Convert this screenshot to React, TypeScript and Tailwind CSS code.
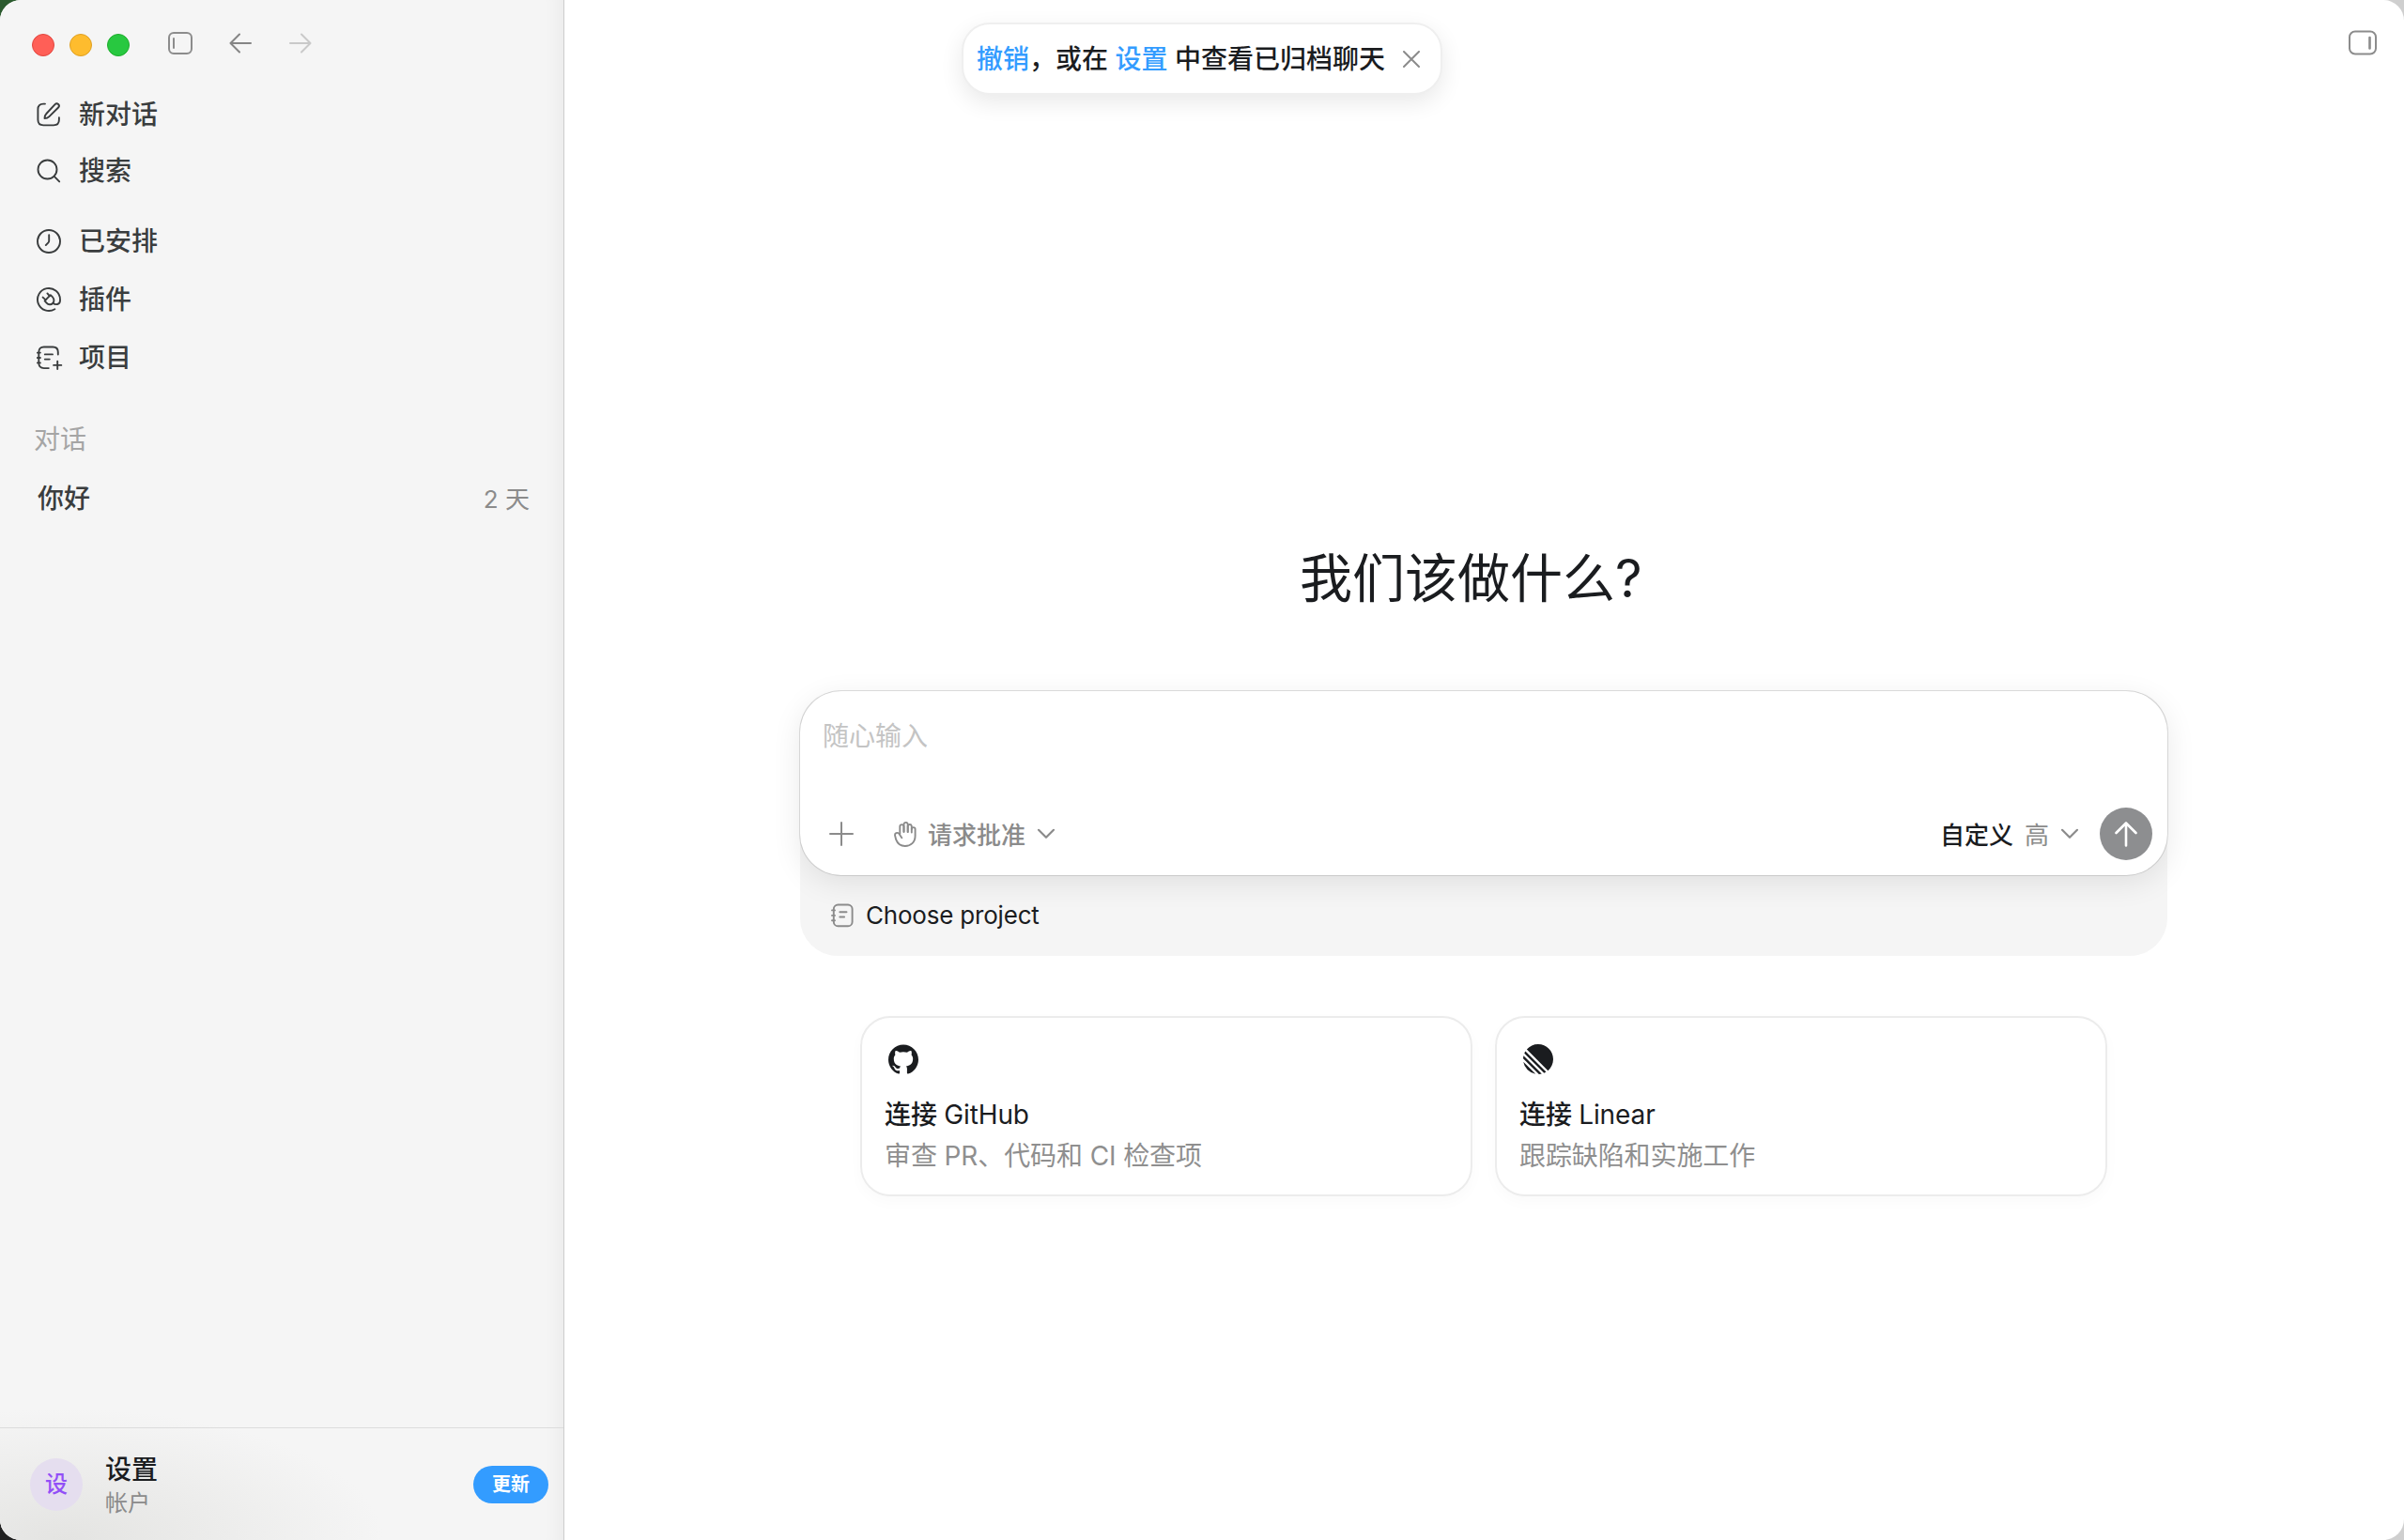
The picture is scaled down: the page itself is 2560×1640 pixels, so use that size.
import React from 'react'
import { SiGithub, SiLinear } from 'react-icons/si'

type IconProps = {
  className?: string
  width: number
  height: number
  stroke?: number
  children: React.ReactNode
}

const Icon: React.FC<IconProps> = ({ className = '', width, height, stroke = 2, children }) => (
  <svg
    width={width}
    height={height}
    viewBox={`0 0 ${width} ${height}`}
    fill="none"
    stroke="currentColor"
    strokeWidth={stroke}
    strokeLinecap="round"
    strokeLinejoin="round"
    className={`shrink-0 ${className}`}
  >
    {children}
  </svg>
)

const ComposeIcon = () => (
  <Icon width={26} height={26} stroke={1.9}>
    <path d="M9 1.6H7.2C3.4 1.6 1.4 3.6 1.4 7.4v11.2c0 3.8 2 5.8 5.8 5.8h10.9c3.8 0 5.8-2 5.8-5.8v-2.4" />
    <path d="M19.6 2.1c1-1 2.5-1 3.5-.1 1 1 1 2.5 0 3.5L13.4 15.2c-1.2 1.2-2.9 1.9-4.9 1.9.1-2 .7-3.9 1.9-5.1z" />
  </Icon>
)

const SearchIcon = () => (
  <Icon width={26} height={26} stroke={1.9}>
    <circle cx="11.5" cy="11.5" r="10" />
    <path d="M18.8 18.8L24.2 24.4" />
  </Icon>
)

const ClockIcon = () => (
  <Icon width={26} height={26} stroke={1.9}>
    <circle cx="13" cy="13" r="12" />
    <path d="M13.2 6.2v6.2c0 .8-.3 1.4-.8 2l-2.6 2.7" />
  </Icon>
)

const PluginIcon = () => (
  <Icon width={26} height={26} stroke={1.9}>
    <path d="M19.3 23.2A12 12 0 1 1 25 13v1c0 4.6-5 5.2-7.6 2.6" />
    <path d="M8.6 14.4l6.2-6.2 2 2c2 2 2.2 5 .4 6.8s-4.8 1.6-6.6-.4z" />
    <path d="M6.6 10.6l3 2.8M11.4 6.4l2.4 2.8" />
  </Icon>
)

const ProjectAddIcon = () => (
  <Icon width={28} height={26} stroke={1.9}>
    <path d="M22.8 9.6V7c0-3.6-1.9-5.5-5.5-5.5H7.8C4.2 1.5 2.3 3.4 2.3 7v11.6c0 3.6 1.9 5.5 5.5 5.5h5" />
    <path d="M.9 7.6h3M.9 13h3M.9 18.4h3M8.8 9.4h8.2M8.8 14.6h5" />
    <path d="M22.2 16.8v8.2M18.1 20.9h8.2" />
  </Icon>
)

const ProjectIcon = () => (
  <Icon width={24} height={26} stroke={1.9} className="text-[#8b8b8b]">
    <rect x="2.8" y="1.5" width="19.8" height="22.8" rx="4.6" />
    <path d="M1 7.4h3M1 12.9h3M1 18.2h3M9.3 9.2h7.2M9.3 14.5h4.8" />
  </Icon>
)

const HandIcon = () => (
  <Icon width={24} height={27} stroke={1.9}>
    <path d="M6.3 13V5.2a2.1 2.1 0 0 1 4.2 0V11" />
    <path d="M10.5 10.5V3a2.1 2.1 0 0 1 4.2 0v8" />
    <path d="M14.7 11V4.6a2.1 2.1 0 0 1 4.1 0V11.5" />
    <path d="M18.8 8a1.9 1.9 0 0 1 3.8 0V15c0 7-4.8 11-10.8 11-5 0-8-2.5-9.6-6.8L1.2 15.3c-.9-3.4 2.5-4.4 4.3-2.3l2.8 4.2" />
  </Icon>
)

const ChevronIcon = () => (
  <Icon width={20} height={12} stroke={2.2}>
    <path d="M2 1.8l8 8 8-8" />
  </Icon>
)

const navGroups = [
  [
    { label: '新对话', icon: <ComposeIcon /> },
    { label: '搜索', icon: <SearchIcon /> },
  ],
  [
    { label: '已安排', icon: <ClockIcon /> },
    { label: '插件', icon: <PluginIcon /> },
    { label: '项目', icon: <ProjectAddIcon /> },
  ],
]

const connectors = [
  { name: 'GitHub', description: '审查 PR、代码和 CI 检查项', icon: <SiGithub size={32} /> },
  { name: 'Linear', description: '跟踪缺陷和实施工作', icon: <SiLinear size={32} /> },
]

const TitleBar: React.FC = () => (
  <div className="flex h-[91px] shrink-0 items-center pl-[34px]">
    <div className="mt-[5px] flex gap-4">
      <span className="size-6 rounded-full border border-[#e2463f] bg-[#ff5f57]" />
      <span className="size-6 rounded-full border border-[#dfa023] bg-[#febc2e]" />
      <span className="size-6 rounded-full border border-[#1dad2b] bg-[#28c840]" />
    </div>
    <Icon width={26} height={24} className="ml-[41px] text-[#8c8c8c]">
      <rect x="1" y="1" width="24" height="22" rx="5" />
      <path d="M6 7v10" />
    </Icon>
    <Icon width={24} height={22} className="ml-[39px] text-[#858585]">
      <path d="M23 11H1.5M11 1.5L1.5 11l9.5 9.5" />
    </Icon>
    <Icon width={24} height={22} className="ml-10 text-[#c9c9c9]">
      <path d="M1 11h21.5M13 1.5l9.5 9.5-9.5 9.5" />
    </Icon>
  </div>
)

const Sidebar: React.FC = () => (
  <aside className="flex w-[601px] shrink-0 flex-col border-r border-[#cdcdcd] bg-[#f5f5f5] bg-[radial-gradient(ellipse_at_10%_100%,rgba(228,228,226,1),rgba(245,245,245,0)_38%)] bg-[length:700px_260px] bg-bottom-left bg-no-repeat shadow-[inset_-24px_0_20px_-20px_rgba(0,0,0,0.05)]">
    <TitleBar />
    <nav className="flex flex-col gap-[14px] pt-px text-[28px] font-medium text-[#3a3d3e]">
      {navGroups.map((group, index) => (
        <ul key={index}>
          {group.map((item) => (
            <li key={item.label} className={`flex items-center pl-[39px] ${index === 0 ? 'h-[60px]' : 'h-[62px]'}`}>
              <span className="flex w-[45px] items-center">{item.icon}</span>
              {item.label}
            </li>
          ))}
        </ul>
      ))}
    </nav>
    <section className="mt-[25px] text-[28px]">
      <h2 className="flex h-[62px] items-center pl-[36px] text-[#a5a5a5]">对话</h2>
      <div className="flex h-[64px] items-center justify-between pr-[36px] pl-10">
        <span className="font-medium text-[#3a3d3e]">你好</span>
        <span className="text-[26px] text-[#8b8b8b]">2 天</span>
      </div>
    </section>
    <footer className="mt-auto flex h-[120px] items-center border-t border-[#dcdcdc] pr-4 pl-8">
      <div className="flex size-14 items-center justify-center rounded-full bg-[#e5deef] text-[24px] font-medium text-[#924ff7]">
        设
      </div>
      <div className="mt-[2px] ml-6 flex flex-col">
        <span className="text-[28px] leading-[38px] font-medium text-[#1a1c1f]">设置</span>
        <span className="text-[24px] leading-[34px] text-[#8b8b8b]">帐户</span>
      </div>
      <button className="ml-auto h-10 w-20 rounded-full bg-[#339cff] text-[20px] font-bold text-white">更新</button>
    </footer>
  </aside>
)

const Toast: React.FC = () => (
  <div className="absolute top-[24px] left-[423px] flex h-[77px] w-[512px] items-center rounded-[30px] border-2 border-[#efefef] bg-white pt-px pl-[14px] text-[28px] font-medium whitespace-pre text-[#1a1c1f] shadow-[0_8px_24px_rgba(0,0,0,0.09)]">
    <span className="text-[#339cff]">撤销</span>，或在 <span className="text-[#339cff]">设置</span> 中查看已归档聊天
    <Icon width={18} height={18} className="ml-[19px] text-[#8b8b8b]">
      <path d="M1 1l16 16M17 1L1 17" />
    </Icon>
  </div>
)

const Composer: React.FC = () => (
  <div className="w-[1456px] rounded-[40px] bg-[#f5f5f5]">
    <div className="flex h-[196px] flex-col justify-between rounded-[44px] bg-white shadow-[0_0_0_1px_rgba(0,0,0,0.12),0_8px_32px_rgba(0,0,0,0.09)]">
      <p className="mt-[27px] ml-[24px] text-[28px] leading-[42px] text-[#c4c4c4]">随心输入</p>
      <div className="mb-4 flex h-14 items-center pr-4 pl-[31px] text-[26px] text-[#8b8b8b]">
        <Icon width={26} height={26}>
          <path d="M13 1v24M1 13h24" />
        </Icon>
        <button className="ml-[43px] flex items-center">
          <HandIcon />
          <span className="mt-0.5 mr-[12px] ml-[12px] font-medium">请求批准</span>
          <ChevronIcon />
        </button>
        <button className="mr-[22px] ml-auto flex items-center">
          <span className="mt-0.5 font-medium text-[#1a1c1f]">自定义</span>
          <span className="mt-0.5 mr-[12px] ml-[12px]">高</span>
          <ChevronIcon />
        </button>
        <button className="flex size-14 items-center justify-center rounded-full bg-[#8d8e90] text-white">
          <Icon width={24} height={27} stroke={2.6}>
            <path d="M12 25.5V1.5M1.5 12L12 1.5 22.5 12" />
          </Icon>
        </button>
      </div>
    </div>
    <div className="flex h-[86px] items-center pb-px pl-[33px] text-[26px] tracking-[-0.2px] text-[#1a1c1f]">
      <ProjectIcon />
      <span className="ml-[13px]">Choose project</span>
    </div>
  </div>
)

const App: React.FC = () => (
  <div className="h-[1640px] w-[2560px] bg-[linear-gradient(to_right,transparent_50%,#cfcfcf_50%),linear-gradient(to_bottom,#2b5a2e_50%,#222222_50%)] font-['Inter','Noto_Sans_CJK_SC',sans-serif]">
    <div className="flex h-full overflow-hidden rounded-[22px] bg-white">
      <Sidebar />
      <main className="relative flex flex-1 flex-col">
        <Toast />
        <Icon width={30} height={27} className="mt-[32px] mr-[29px] self-end text-[#8c8c8c]">
          <rect x="1" y="1.5" width="28" height="24" rx="6" />
          <path d="M22.5 8v11.5" strokeWidth={2.6} />
        </Icon>
        <h1 className="mt-[517px] ml-[783px] text-[56px] leading-[80px] whitespace-nowrap text-[#1a1c1f]">我们该做什么?</h1>
        <div className="mt-[80px] ml-[251px]">
          <Composer />
        </div>
        <div className="mt-[64px] ml-[315px] flex gap-[24px]">
          {connectors.map((connector) => (
            <div
              key={connector.name}
              className="h-[192px] w-[652px] rounded-[32px] border-2 border-[#ececec] pt-[28px] pl-[24px] text-[28px] leading-[44px] tracking-[-0.1px] text-[#1a1c1f] shadow-[0_6px_16px_rgba(0,0,0,0.025)]"
            >
              <div className="ml-[4px]">{connector.icon}</div>
              <h3 className="mt-[21px] font-medium">
                连接 <span className="font-normal">{connector.name}</span>
              </h3>
              <p className="text-[#8f8f8f]">{connector.description}</p>
            </div>
          ))}
        </div>
      </main>
    </div>
  </div>
)

export default App
